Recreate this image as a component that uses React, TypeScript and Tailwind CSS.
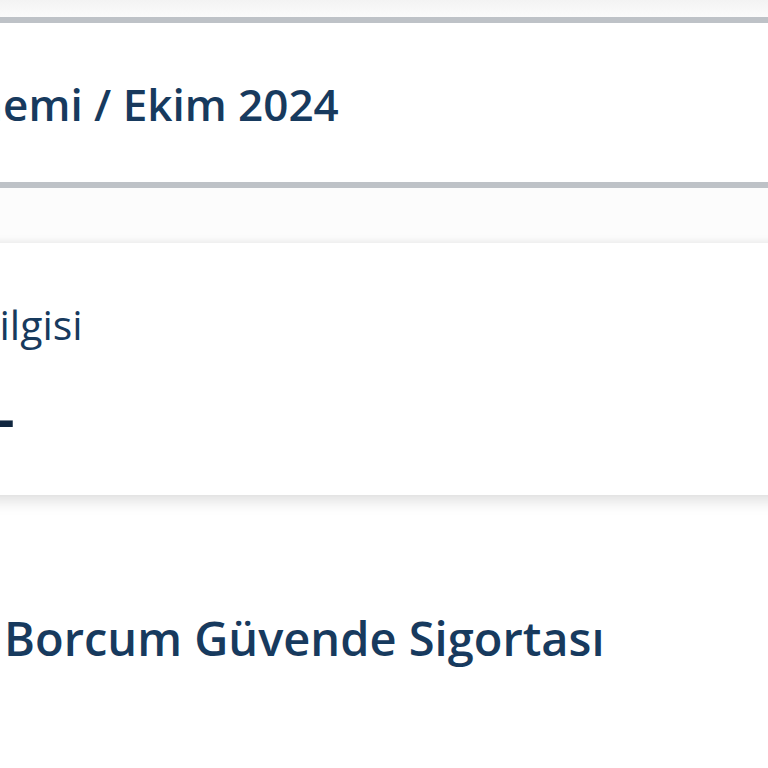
import React from "react";

const App = () => {
  return (
    <div className="w-[768px] h-[768px] overflow-hidden bg-white text-[#173a5e] font-['Open_Sans',sans-serif]">
      {/* top strip */}
      <div className="h-[17px] bg-gradient-to-b from-[#f3f3f3] to-[#fbfbfb]" />

      {/* period box */}
      <div className="h-[171px] border-y-[6px] border-[#bec2c7] bg-white pt-[59px]">
        <h2 className="-ml-[84px] whitespace-nowrap text-[44px] font-semibold leading-none">
          Dönemi / Ekim 2024
        </h2>
      </div>

      {/* gap */}
      <div className="h-[55px] bg-[#fcfcfc]" />

      {/* info card */}
      <div className="-mx-4 h-[252px] bg-white pt-[61px] shadow-[0_6px_14px_rgba(0,0,0,0.13),0_-2px_6px_rgba(0,0,0,0.04)]">
        <p className="ml-[-11px] whitespace-nowrap text-[41px] font-medium leading-none">
          Bilgisi
        </p>
        <p className="ml-[13px] mt-[45px] whitespace-nowrap text-[54px] font-bold leading-none text-[#10263f]">
          -
        </p>
      </div>

      {/* section title */}
      <h1 className="mt-[120px] ml-[4px] whitespace-nowrap text-[47px] font-semibold leading-none">
        Borcum Güvende Sigortası
      </h1>
    </div>
  );
};

export default App;
